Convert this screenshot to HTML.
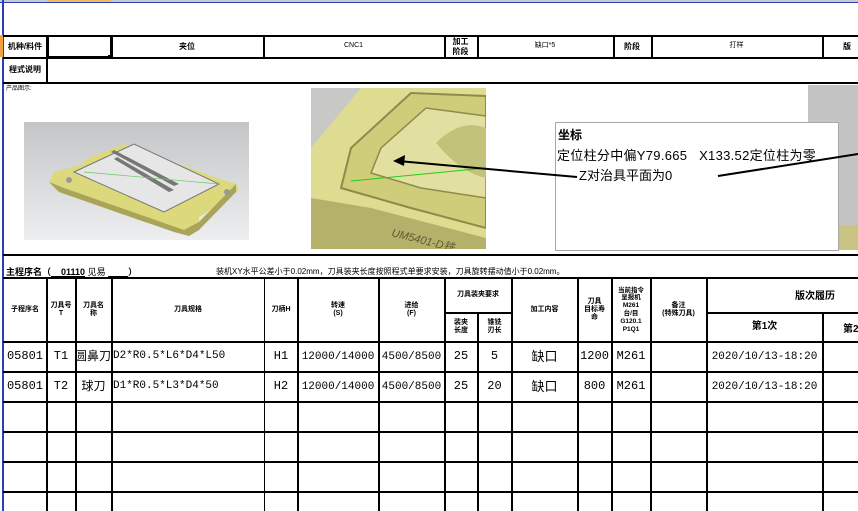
<!DOCTYPE html><html><head><meta charset="utf-8"><style>
body{margin:0;width:858px;height:511px;overflow:hidden;background:#fff;position:relative;font-family:"Liberation Sans","Noto Sans CJK SC",sans-serif;color:#000}
.a{position:absolute}
.h{position:absolute;height:2px;background:#000}
.v{position:absolute;width:1.5px;background:#000}
.t{position:absolute;display:flex;align-items:center;justify-content:center;text-align:center;line-height:1.15}
.s{font-size:7px;font-weight:bold}
.d{font-size:12px;font-family:"Liberation Mono","Noto Sans CJK SC",monospace}
</style></head><body>
<div class="a" style="left:0;top:0;width:858px;height:2px;background:#c8ccd2"></div>
<div class="a" style="left:47px;top:0;width:64px;height:2px;background:#f4b860"></div>
<div class="a" style="left:0;top:2px;width:858px;height:1px;background:#2a3fb0"></div>
<div class="a" style="left:2px;top:0;width:2px;height:511px;background:#2a3fb0"></div>
<div class="a" style="left:0;top:35px;width:3px;height:22px;background:#f4a040"></div>

<div class="h" style="left:3px;top:35px;width:855px"></div>
<div class="h" style="left:3px;top:57px;width:855px"></div>
<div class="h" style="left:3px;top:82px;width:855px"></div>
<div class="v" style="left:46px;top:35px;height:47px"></div>
<div class="a" style="left:47px;top:35px;width:61px;height:19px;border:2px solid #000"></div>
<div class="a" style="left:108px;top:55px;width:4px;height:3px;background:#000"></div>
<div class="v" style="left:111px;top:35px;height:22px"></div>
<div class="v" style="left:263px;top:35px;height:22px"></div>
<div class="v" style="left:444px;top:35px;height:22px"></div>
<div class="v" style="left:477px;top:35px;height:22px"></div>
<div class="v" style="left:613px;top:35px;height:22px"></div>
<div class="v" style="left:651px;top:35px;height:22px"></div>
<div class="v" style="left:822px;top:35px;height:22px"></div>
<div class="t s" style="left:4px;top:36px;width:42px;height:21px;font-size:8px">机种/料件</div>
<div class="t s" style="left:111px;top:36px;width:152px;height:21px;font-size:8px">夹位</div>
<div class="t" style="left:263px;top:36px;width:181px;height:21px;font-size:7px">CNC1</div>
<div class="t s" style="left:444px;top:36px;width:33px;height:21px;font-size:8px">加工<br>阶段</div>
<div class="t" style="left:477px;top:36px;width:136px;height:21px;font-size:7px">缺口*5</div>
<div class="t s" style="left:613px;top:36px;width:38px;height:21px;font-size:8px">阶段</div>
<div class="t" style="left:651px;top:36px;width:171px;height:21px;font-size:7px">打样</div>
<div class="t s" style="left:822px;top:36px;width:50px;height:21px;font-size:8px">版</div>
<div class="t s" style="left:4px;top:58px;width:42px;height:24px;font-size:8px">程式说明</div>
<div class="a" style="left:6px;top:83px;font-size:6px">产品图示:</div>

<svg class="a" style="left:24px;top:122px" width="225" height="118">
<defs><linearGradient id="g1" x1="0" y1="0" x2="0" y2="1"><stop offset="0" stop-color="#c4c5c7"/><stop offset="1" stop-color="#eceef0"/></linearGradient></defs>
<rect width="225" height="118" fill="url(#g1)"/>
<polygon points="30,50 60,42 60,38 80,30 100,22 190,55 212,62 215,68 200,80 175,95 175,105 165,112 150,108 120,100 35,70 25,60" fill="#dcd97c"/>
<polygon points="25,60 35,70 150,110 165,114 175,108 212,70 212,62 175,100 160,108 40,66" fill="#a9a45a"/>
<polygon points="50,50 110,22 195,62 140,90" fill="#e6e6e6" stroke="#777" stroke-width="1"/>
<polygon points="90,28 155,62 150,64 87,30" fill="#777"/><polygon points="93,35 150,68 145,70 90,37" fill="#777"/>
<line x1="60" y1="50" x2="195" y2="62" stroke="#6c6" stroke-width="0.7"/>
<circle cx="45" cy="58" r="3" fill="#999"/><circle cx="203" cy="70" r="3" fill="#999"/>
</svg>

<svg class="a" style="left:311px;top:88px" width="175" height="161">
<rect width="175" height="161" fill="#c8c8c6"/>
<polygon points="0,60 50,0 175,0 175,161 0,161" fill="#dedc90"/>
<polygon points="40,60 100,5 175,8 175,140 100,120 30,100" fill="#cfcc7a" stroke="#8d8a4c" stroke-width="2"/>
<polygon points="70,60 115,20 175,28 175,110 110,100 60,85" fill="#e2e0a0" stroke="#8d8a4c" stroke-width="1.5"/>
<path d="M125,55 q25,-25 50,-15 v50 q-25,-5 -50,-35z" fill="#c3c27a"/>
<polygon points="0,110 60,120 175,150 175,161 0,161" fill="#b5b06a"/>
<text x="80" y="148" font-size="11" font-style="italic" fill="#5e5a30" transform="rotate(14 80 148)" font-family="Liberation Sans">UM5401-D铣</text>
<line x1="40" y1="93" x2="175" y2="80" stroke="#2c2" stroke-width="1"/>
</svg>
<div class="a" style="left:808px;top:85px;width:50px;height:165px;background:#c4c4c4"></div>
<div class="a" style="left:808px;top:225px;width:50px;height:25px;background:#c9c482"></div>

<div class="a" style="left:555px;top:122px;width:282px;height:127px;background:#fff;border:1px solid #a8a8a8"></div>
<div class="a" style="left:558px;top:126px;font-size:12px;font-weight:bold">坐标</div>
<div class="a" style="left:557px;top:145px;font-size:13px;white-space:nowrap;letter-spacing:0.3px">定位柱分中偏Y79.665&nbsp;&nbsp;&nbsp;X133.52定位柱为零</div>
<div class="a" style="left:579px;top:165px;font-size:13px;white-space:nowrap">Z对治具平面为0</div>
<svg class="a" style="left:0;top:0" width="858" height="300">
<line x1="577" y1="177" x2="398" y2="161" stroke="#000" stroke-width="2"/>
<polygon points="393,161 405,155 404,166" fill="#000"/>
<line x1="718" y1="176" x2="858" y2="154" stroke="#000" stroke-width="2"/>
</svg>

<div class="h" style="left:3px;top:254px;width:855px"></div>
<div class="a" style="left:6px;top:265px;font-size:9px;font-weight:bold;white-space:nowrap">主程序名（<u>&nbsp;&nbsp;&nbsp;&nbsp;01110</u> <span style="font-weight:normal">见易</span> <u>&nbsp;&nbsp;&nbsp;&nbsp;&nbsp;&nbsp;&nbsp;&nbsp;</u>）</div>
<div class="a" style="left:216px;top:266px;font-size:8px;white-space:nowrap">装机XY水平公差小于0.02mm，刀具装夹长度按照程式单要求安装，刀具旋转摆动值小于0.02mm。</div>

<div class="h" style="left:3px;top:277px;width:855px"></div>
<div class="h" style="left:444px;top:312px;width:67px"></div>
<div class="h" style="left:706px;top:312px;width:152px"></div>
<div class="h" style="left:3px;top:341px;width:855px"></div>
<div class="h" style="left:3px;top:371px;width:855px"></div>
<div class="h" style="left:3px;top:401px;width:855px"></div>
<div class="h" style="left:3px;top:431px;width:855px"></div>
<div class="h" style="left:3px;top:461px;width:855px"></div>
<div class="h" style="left:3px;top:491px;width:855px"></div>
<div class="v" style="left:46px;top:277px;height:234px"></div>
<div class="v" style="left:75px;top:277px;height:234px"></div>
<div class="v" style="left:111px;top:277px;height:234px"></div>
<div class="v" style="left:264px;top:277px;height:234px;width:1px"></div>
<div class="v" style="left:297px;top:277px;height:234px"></div>
<div class="v" style="left:378px;top:277px;height:234px"></div>
<div class="v" style="left:444px;top:277px;height:234px"></div>
<div class="v" style="left:477px;top:312px;height:199px"></div>
<div class="v" style="left:511px;top:277px;height:234px"></div>
<div class="v" style="left:577px;top:277px;height:234px"></div>
<div class="v" style="left:611px;top:277px;height:234px"></div>
<div class="v" style="left:650px;top:277px;height:234px"></div>
<div class="v" style="left:706px;top:277px;height:234px"></div>
<div class="v" style="left:822px;top:312px;height:199px"></div>

<div class="t s" style="left:4px;top:279px;width:42px;height:62px">子程序名</div>
<div class="t s" style="left:47px;top:279px;width:28px;height:62px">刀具号<br>T</div>
<div class="t s" style="left:76px;top:279px;width:35px;height:62px">刀具名<br>称</div>
<div class="t s" style="left:112px;top:279px;width:152px;height:62px">刀具规格</div>
<div class="t s" style="left:265px;top:279px;width:32px;height:62px">刀柄H</div>
<div class="t s" style="left:298px;top:279px;width:80px;height:62px">转速<br>(S)</div>
<div class="t s" style="left:379px;top:279px;width:65px;height:62px">进给<br>(F)</div>
<div class="t s" style="left:445px;top:279px;width:66px;height:33px">刀具装夹要求</div>
<div class="t s" style="left:445px;top:313px;width:32px;height:28px">装夹<br>长度</div>
<div class="t s" style="left:478px;top:313px;width:33px;height:28px">锥铣<br>刃长</div>
<div class="t s" style="left:512px;top:279px;width:65px;height:62px">加工内容</div>
<div class="t s" style="left:578px;top:279px;width:33px;height:62px">刀具<br>目标寿<br>命</div>
<div class="t s" style="left:612px;top:279px;width:38px;height:62px;font-size:6.5px;line-height:1.2">当前指令<br>呈报机<br>M261<br>台/目<br>G120.1<br>P1Q1</div>
<div class="t s" style="left:651px;top:279px;width:55px;height:62px">备注<br>(特殊刀具)</div>
<div class="a" style="left:795px;top:287px;font-size:10px;font-weight:bold;white-space:nowrap">版次履历</div>
<div class="t" style="left:707px;top:313px;width:115px;height:28px;font-size:10px;font-weight:bold">第1次</div>
<div class="a" style="left:843px;top:320px;font-size:10px;font-weight:bold;white-space:nowrap">第2</div>

<div class="t d" style="left:4px;top:343px;width:42px;height:28px">05801</div>
<div class="t d" style="left:47px;top:343px;width:28px;height:28px">T1</div>
<div class="t" style="left:74px;top:343px;width:38px;height:28px;font-size:12px;white-space:nowrap">圆鼻刀</div>
<div class="a d" style="left:113px;top:350px;font-size:11px">D2*R0.5*L6*D4*L50</div>
<div class="t d" style="left:265px;top:343px;width:32px;height:28px">H1</div>
<div class="t d" style="left:298px;top:343px;width:80px;height:28px;font-size:11px">12000/14000</div>
<div class="t d" style="left:379px;top:343px;width:65px;height:28px;font-size:11px">4500/8500</div>
<div class="t d" style="left:445px;top:343px;width:32px;height:28px">25</div>
<div class="t d" style="left:478px;top:343px;width:33px;height:28px">5</div>
<div class="t" style="left:512px;top:343px;width:65px;height:28px;font-size:13px">缺口</div>
<div class="t d" style="left:578px;top:343px;width:33px;height:28px">1200</div>
<div class="t d" style="left:612px;top:343px;width:38px;height:28px">M261</div>
<div class="t d" style="left:707px;top:343px;width:115px;height:28px;font-size:11px">2020/10/13-18:20</div>

<div class="t d" style="left:4px;top:373px;width:42px;height:28px">05801</div>
<div class="t d" style="left:47px;top:373px;width:28px;height:28px">T2</div>
<div class="t" style="left:76px;top:373px;width:35px;height:28px;font-size:12px">球刀</div>
<div class="a d" style="left:113px;top:380px;font-size:11px">D1*R0.5*L3*D4*50</div>
<div class="t d" style="left:265px;top:373px;width:32px;height:28px">H2</div>
<div class="t d" style="left:298px;top:373px;width:80px;height:28px;font-size:11px">12000/14000</div>
<div class="t d" style="left:379px;top:373px;width:65px;height:28px;font-size:11px">4500/8500</div>
<div class="t d" style="left:445px;top:373px;width:32px;height:28px">25</div>
<div class="t d" style="left:478px;top:373px;width:33px;height:28px">20</div>
<div class="t" style="left:512px;top:373px;width:65px;height:28px;font-size:13px">缺口</div>
<div class="t d" style="left:578px;top:373px;width:33px;height:28px">800</div>
<div class="t d" style="left:612px;top:373px;width:38px;height:28px">M261</div>
<div class="t d" style="left:707px;top:373px;width:115px;height:28px;font-size:11px">2020/10/13-18:20</div>
</body></html>
